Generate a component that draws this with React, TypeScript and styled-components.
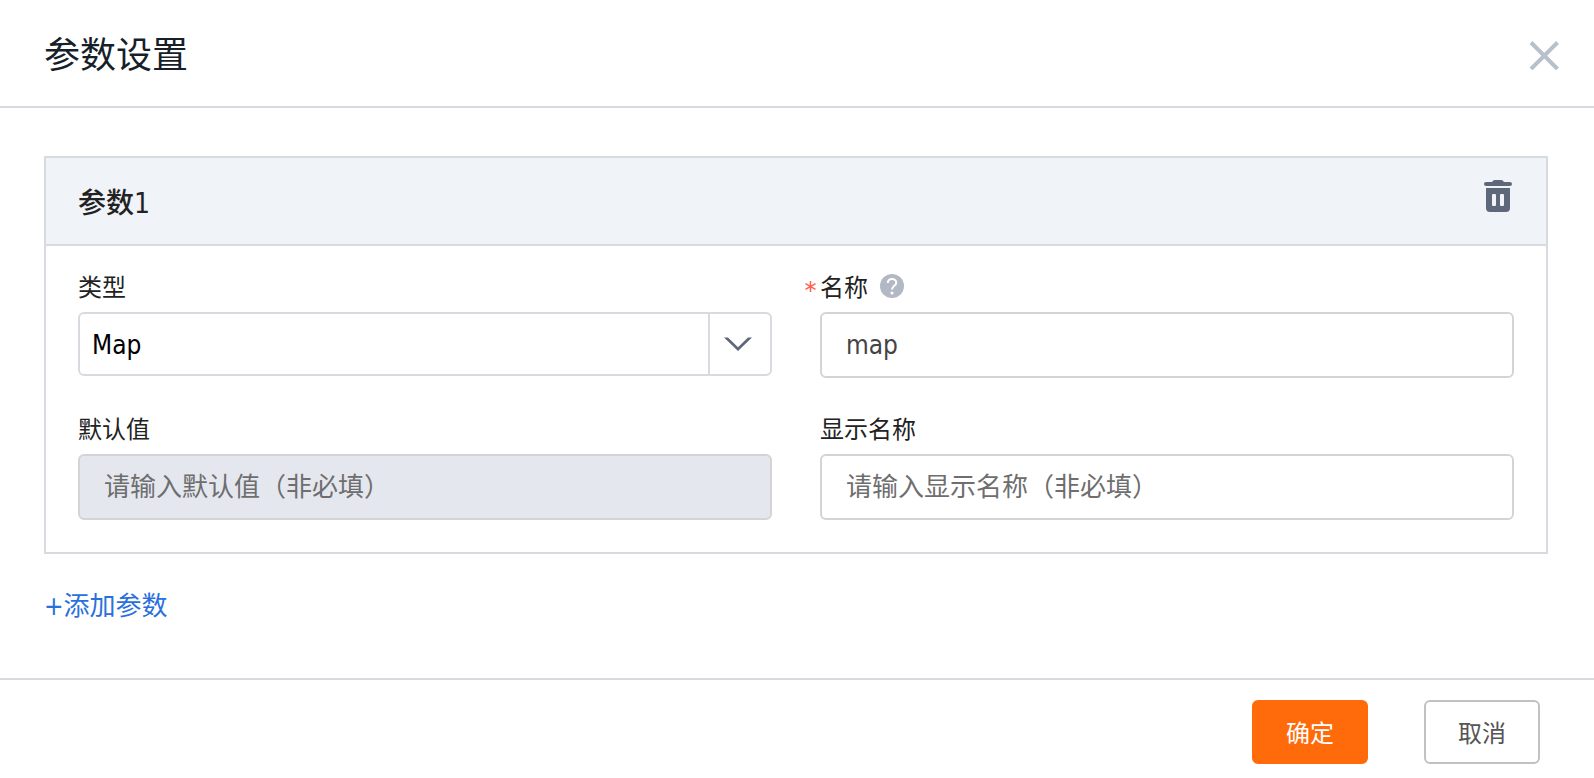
import React, { useState } from "react";
import styled, { createGlobalStyle, css } from "styled-components";

const GlobalStyle = createGlobalStyle`
  *, *::before, *::after { box-sizing: border-box; }
  body {
    margin: 0;
    background: #fff;
    font-family: "DejaVu Sans Condensed", "Noto Sans CJK SC", sans-serif;
    font-size: 24px;
    line-height: 36px;
    color: #222;
  }
  button, input, select { font-family: inherit; }
`;

const line = "#d7dbe0";
const slate = "#5f677b";

const Dialog = styled.section`
  display: flex;
  flex-direction: column;
  min-height: 100vh;
`;

const Header = styled.header`
  display: flex;
  align-items: center;
  justify-content: space-between;
  padding: 28px 34px 26px 44px;
  border-bottom: 2px solid ${line};
`;

const Title = styled.h1`
  margin: 0;
  padding-top: 4px;
  font-size: 36px;
  font-weight: 400;
  line-height: 48px;
  color: #171f2b;
`;

const IconButton = styled.button`
  display: flex;
  padding: 0;
  border: 0;
  background: none;
  cursor: pointer;
`;

const Body = styled.main`
  flex: 1;
  padding: 48px 46px 52px 44px;
`;

const Card = styled.section`
  margin-bottom: 32px;
  border: 2px solid ${line};
`;

const CardHeader = styled.div`
  display: flex;
  align-items: flex-start;
  justify-content: space-between;
  padding: 22px 34px 22px 32px;
  border-bottom: 2px solid ${line};
  background: #f0f3f8;
`;

const CardTitle = styled.h2`
  margin: 0;
  padding-top: 6px;
  font-size: 28px;
  font-weight: 500;
  line-height: 36px;
`;

const Fields = styled.div`
  display: grid;
  grid-template-columns: 1fr 1fr;
  gap: 32px 48px;
  padding: 22px 32px 32px;
`;

const Field = styled.div`
  display: flex;
  flex-direction: column;
  gap: 8px;
`;

const LabelRow = styled.div`
  position: relative;
  display: flex;
  align-items: center;
  gap: 12px;
  height: 36px;
`;

const Label = styled.label`
  padding-top: 4px;
`;

const Required = styled.span`
  position: absolute;
  right: 100%;
  display: flex;
  padding-right: 4px;
`;

const control = css`
  width: 100%;
  border-radius: 6px;
  font-size: 26px;
`;

const TextInput = styled.input`
  ${control}
  height: 66px;
  padding: 0 24px;
  border: 2px solid #d4d4d4;
  background: #fff;
  color: #444;
  &::placeholder { color: #6e6e6e; opacity: 1; }
  &:disabled { background: #e4e7ee; }
`;

const SelectBox = styled.div`
  display: grid;
  grid-template-columns: 1fr 64px;
`;

const Select = styled.select`
  ${control}
  grid-area: 1 / 1 / 2 / 3;
  height: 64px;
  padding: 2px 76px 0 12px;
  border: 2px solid ${line};
  background: #fff;
  color: #000;
  appearance: none;
`;

const SelectArrow = styled.span`
  grid-area: 1 / 2 / 2 / 3;
  z-index: 1;
  display: flex;
  align-items: center;
  padding-left: 14px;
  border-left: 2px solid ${line};
  margin: 2px 0;
  pointer-events: none;
`;

const AddLink = styled.a`
  display: inline-block;
  font-size: 26px;
  line-height: 40px;
  color: #2a70dc;
  text-decoration: none;
`;

const Footer = styled.footer`
  display: flex;
  justify-content: flex-end;
  gap: 56px;
  padding: 20px 54px 14px;
  border-top: 2px solid ${line};
`;

const Button = styled.button<{ $primary?: boolean }>`
  width: 116px;
  height: 64px;
  padding: 0 0 2px;
  border: 2px solid ${(p) => (p.$primary ? "#ff6a0a" : "#c1c1c1")};
  border-radius: 6px;
  background: ${(p) => (p.$primary ? "#ff6a0a" : "#fff")};
  color: ${(p) => (p.$primary ? "#fff" : "#555")};
  font-size: 24px;
  cursor: pointer;
`;

const CloseIcon = () => (
  <svg width="32" height="32" viewBox="0 0 32 32" fill="none" stroke="#b8c0cc" strokeWidth="4">
    <path d="M3 4.5l26.5 26.5M29.5 4.5l-26.5 26.5" />
  </svg>
);

const TrashIcon = () => (
  <svg width="28" height="32" viewBox="0 0 28 32" fill={slate}>
    <path d="M8 2Q9 0 11 0H17Q19 0 20 2H26Q28 2 28 4Q28 6 26 6H2Q0 6 0 4Q0 2 2 2Z" />
    <path
      fillRule="evenodd"
      d="M2 8H26V28Q26 32 22 32H6Q2 32 2 28ZM9 14Q8 14 8 15V25Q8 26 9 26H11Q12 26 12 25V15Q12 14 11 14ZM17 14Q16 14 16 15V25Q16 26 17 26H19Q20 26 20 25V15Q20 14 19 14Z"
    />
  </svg>
);

const ChevronIcon = () => (
  <svg width="28" height="14" viewBox="0 0 28 14" fill={slate}>
    <path d="M0 0.5H4L14 10.2L24 0.5H28L14 14Z" />
  </svg>
);

const HelpIcon = () => (
  <svg width="24" height="24" viewBox="0 0 24 24" fill="none">
    <circle cx="12" cy="12" r="12" fill="#b3b8c5" />
    <path
      d="M7.8 9C7.8 6.4 9.6 5 12 5S16.3 6.5 16.3 8.7C16.3 11.7 12 11.8 12 15.6"
      stroke="#fff"
      strokeWidth="2"
    />
    <circle cx="12" cy="19" r="1.6" fill="#fff" />
  </svg>
);

const AsteriskIcon = () => (
  <svg width="11" height="11" viewBox="0 0 11 11" stroke="#ff6055" strokeWidth="1.5">
    <path d="M5.5 0V11M0.5 2.6L10.5 8.4M10.5 2.6L0.5 8.4" />
  </svg>
);

export default function App() {
  const [name, setName] = useState("map");
  return (
    <>
      <GlobalStyle />
      <Dialog role="dialog" aria-labelledby="dialog-title">
        <Header>
          <Title id="dialog-title">参数设置</Title>
          <IconButton type="button" aria-label="关闭">
            <CloseIcon />
          </IconButton>
        </Header>
        <Body>
          <Card>
            <CardHeader>
              <CardTitle>参数1</CardTitle>
              <IconButton type="button" aria-label="删除">
                <TrashIcon />
              </IconButton>
            </CardHeader>
            <Fields>
              <Field>
                <LabelRow>
                  <Label htmlFor="type">类型</Label>
                </LabelRow>
                <SelectBox>
                  <Select id="type" defaultValue="Map">
                    <option>Map</option>
                  </Select>
                  <SelectArrow>
                    <ChevronIcon />
                  </SelectArrow>
                </SelectBox>
              </Field>
              <Field>
                <LabelRow>
                  <Required>
                    <AsteriskIcon />
                  </Required>
                  <Label htmlFor="name">名称</Label>
                  <HelpIcon />
                </LabelRow>
                <TextInput
                  id="name"
                  required
                  value={name}
                  onChange={(e) => setName(e.target.value)}
                />
              </Field>
              <Field>
                <LabelRow>
                  <Label htmlFor="default-value">默认值</Label>
                </LabelRow>
                <TextInput id="default-value" placeholder="请输入默认值（非必填）" disabled />
              </Field>
              <Field>
                <LabelRow>
                  <Label htmlFor="display-name">显示名称</Label>
                </LabelRow>
                <TextInput id="display-name" placeholder="请输入显示名称（非必填）" />
              </Field>
            </Fields>
          </Card>
          <AddLink href="#add">+添加参数</AddLink>
        </Body>
        <Footer>
          <Button type="button" $primary>
            确定
          </Button>
          <Button type="button">取消</Button>
        </Footer>
      </Dialog>
    </>
  );
}
